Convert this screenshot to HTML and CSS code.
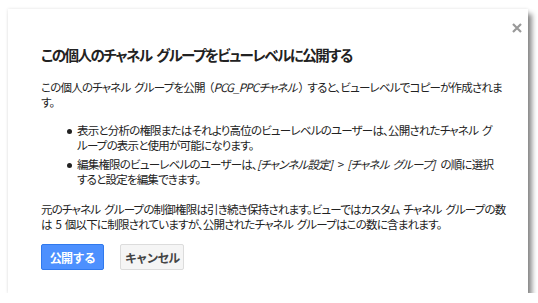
FILE: index.html
```html
<!DOCTYPE html>
<html lang="ja">
<head>
    <meta charset="UTF-8">
    <title>チャネル グループを公開</title>
    <link rel="stylesheet" href="styles.css">
</head>
<body>
    <div class="dialog">
        <svg class="close" width="10" height="10" viewBox="0 0 10 10">
            <path d="M1 1L9 9M9 1L1 9" stroke="#999" stroke-width="2.2" fill="none"/>
        </svg>
        <h2 class="title">この個人のチャネル グループをビューレベルに公開する</h2>
        <p class="text">この個人のチャネル グループを公開 （<i>PCG_PPCチャネル</i>） すると、ビューレベルでコピーが作成されます。</p>
        <ul class="list">
            <li>表示と分析の権限またはそれより高位のビューレベルのユーザーは、公開されたチャネル グループの表示と使用が可能になります。</li>
            <li>編集権限のビューレベルのユーザーは、<i>[チャンネル設定]</i> &gt; <i>[チャネル グループ]</i> の順に選択すると設定を編集できます。</li>
        </ul>
        <p class="text">元のチャネル グループの制御権限は引き続き保持されます。ビューではカスタム チャネル グループの数は 5 個以下に制限されていますが、公開されたチャネル グループはこの数に含まれます。</p>
        <div class="buttons">
            <button class="btn btn-blue">公開する</button>
            <button class="btn btn-grey">キャンセル</button>
        </div>
    </div>
</body>
</html>
```

FILE: styles.css
```css
body {
    margin: 0;
    padding: 9px 0 0 8px;
    background-color: #fff;
    color: #222;
    font-family: "Noto Sans CJK JP", "Liberation Sans", sans-serif;
    font-feature-settings: "palt";
    line-break: strict;
}

.dialog {
    position: relative;
    box-sizing: border-box;
    width: 520px;
    height: 284px;
    padding: 36px 22px 0 33px;
    background-color: #fff;
    box-shadow: 0 0 3px rgba(0, 0, 0, 0.12), 4px 5px 5px rgba(0, 0, 0, 0.45);
}

.close {
    position: absolute;
    top: 14px;
    right: 6px;
}

.title {
    margin: 0 0 15px;
    font-size: 14.5px;
    line-height: 20px;
    font-weight: bold;
    letter-spacing: -1.5px;
    word-spacing: 3px;
}

.text,
.list {
    font-size: 11.5px;
    line-height: 15px;
    letter-spacing: -0.8px;
    word-spacing: 2px;
}

.text {
    margin: 0;
}

.text i,
.list i {
    padding-right: 2px;
}

.list {
    margin: 13px 0 15px;
    padding: 0 8px 0 36px;
    list-style: none;
}

.list li {
    position: relative;
    margin-bottom: 4px;
}

.list li::before {
    content: "";
    position: absolute;
    left: -10px;
    top: 6px;
    width: 5px;
    height: 5px;
    border-radius: 50%;
    background-color: #222;
}

.buttons {
    display: flex;
    gap: 16px;
    margin-top: 12px;
}

.btn {
    height: 26px;
    min-width: 63px;
    padding: 0 4px;
    border-radius: 2px;
    font-family: inherit;
    font-size: 12px;
    font-weight: bold;
    letter-spacing: -0.6px;
}

.btn-blue {
    border: 1px solid #3079ed;
    background-color: #4d90fe;
    color: #fff;
}

.btn-grey {
    border: 1px solid #dcdcdc;
    background-color: #f5f5f5;
    color: #444;
    letter-spacing: -1.2px;
}
```
